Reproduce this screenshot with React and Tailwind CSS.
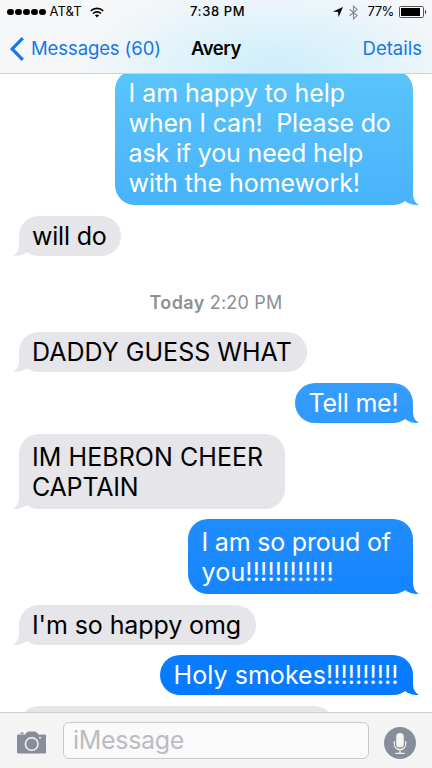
const messages = [
  {
    out: true,
    box: "w-[298px] h-[135px] pt-[8px] from-[#5ac4fb] to-[#49b3fb]",
    tail: "text-[#49b3fb]",
    lines: [
      ["I am happy to help", "tracking-[-0.05px]"],
      ["when I can!  Please do", "tracking-[-0.17px]"],
      ["ask if you need help", "tracking-[-0.15px]"],
      ["with the homework!", "tracking-[-0.06px]"],
    ],
  },
  { box: "w-[102px] h-[40px] pt-[5px]", lines: [["will do", "tracking-[-0.2px]"]] },
  { stamp: true },
  { box: "w-[288px] h-[40px] pt-[5px]", lines: [["DADDY GUESS WHAT", "tracking-[0.02px]"]] },
  {
    out: true,
    box: "w-[118px] h-[40px] pt-[5px] from-[#359dfd] to-[#3099fd]",
    tail: "text-[#3099fd]",
    lines: [["Tell me!", "tracking-[-0.2px]"]],
  },
  {
    box: "w-[266px] h-[75px] pt-[8px]",
    lines: [
      ["IM HEBRON CHEER", "tracking-[0.06px]"],
      ["CAPTAIN", "tracking-[-0.2px]"],
    ],
  },
  {
    out: true,
    box: "w-[225px] h-[75px] pt-[8px] from-[#208dfe] to-[#1684fe]",
    tail: "text-[#1684fe]",
    lines: [
      ["I am so proud of", "tracking-[-0.2px]"],
      ["you!!!!!!!!!!!!", "tracking-[0.18px]"],
    ],
  },
  { box: "w-[237px] h-[40px] pt-[5px]", lines: [["I'm so happy omg", "tracking-[-0.1px]"]] },
  {
    out: true,
    box: "w-[253px] h-[40px] pt-[5px] from-[#0a7dff] to-[#057aff]",
    tail: "text-[#057aff]",
    lines: [["Holy smokes!!!!!!!!!!", "tracking-[0.06px]"]],
  },
  { box: "w-[315px] h-[40px] pt-[5px]", lines: [] },
];

function Tail({ out, color }) {
  return (
    <svg
      viewBox="0 0 20 18"
      className={`absolute bottom-0 h-[18px] w-[20px] ${out ? "-right-[6px]" : "-left-[6px] -scale-x-100"} ${color}`}
    >
      <path d="M14 0V6C14 11.5 15.5 15.5 20 17.8C15.5 18.4 10 17.2 6 14L0 8V0Z" fill="currentColor" />
    </svg>
  );
}

function Bubble({ m }) {
  const look = m.out
    ? "self-end bg-linear-to-b text-white pl-[13.5px]"
    : "self-start bg-[#e5e5ea] text-black pl-[13px]";
  return (
    <div className={`relative shrink-0 rounded-[20px] ${look} ${m.box}`}>
      <Tail out={m.out} color={m.out ? m.tail : "text-[#e5e5ea]"} />
      {m.lines.map(([text, tracking]) => (
        <div key={text} className="relative h-[30px] text-[25px] leading-[30px] whitespace-pre">
          <span className={tracking}>{text}</span>
        </div>
      ))}
    </div>
  );
}

function StatusBar() {
  return (
    <div className="flex h-[24px] items-center pl-[7px] pr-[6px] text-[13px] text-black">
      <div className="flex w-[183px] items-center">
        <div className="flex gap-[1.5px]">
          {[0, 1, 2, 3, 4].map((i) => (
            <span key={i} className="size-[6.5px] rounded-full bg-black" />
          ))}
        </div>
        <span className="ml-[4px] tracking-[0.1px]">AT&amp;T</span>
        <svg viewBox="0 0 14 11" className="ml-[8px] h-[11px] w-[14px]" fill="none" stroke="#000" strokeWidth="1.7">
          <path d="M.7 4C4.2.6 9.8.6 13.3 4M3 6.5C5.2 4.4 8.8 4.4 11 6.5" />
          <path d="M7 10.5L4.9 8.3C6.1 7.2 7.9 7.2 9.1 8.3Z" fill="#000" stroke="none" />
        </svg>
      </div>
      <span className="font-medium tracking-[0.6px]">7:38 PM</span>
      <div className="ml-auto flex items-center">
        <svg viewBox="0 0 10 10" className="h-[10px] w-[10px]">
          <path d="M10 0L5.6 10L5 5L0 4.4Z" />
        </svg>
        <svg viewBox="0 0 10 16" className="ml-[6px] h-[15px] w-[9px]" fill="none" stroke="#8c8f94" strokeWidth="1.3">
          <path d="M.7 4.4L9 11.4L5 15V1L9 4.6L.7 11.6" />
        </svg>
        <span className="ml-[9px] tracking-[-0.4px]">77%</span>
        <div className="ml-[5px] h-[11.5px] w-[25px] rounded-[1.5px] border border-[#555] p-[0.5px]">
          <div className="h-full w-[19px] bg-black" />
        </div>
        <span className="ml-[0.5px] h-[4px] w-[1.5px] rounded-r bg-[#333]" />
      </div>
    </div>
  );
}

export default function App() {
  return (
    <div className="flex h-[768px] w-[432px] flex-col overflow-hidden bg-white font-['Inter','Liberation_Sans',sans-serif]">
      <header className="h-[74px] shrink-0 border-b border-[#c9d3d9] bg-[#f6f7f9] bg-[radial-gradient(ellipse_200px_90px_at_275px_70px,#cdeefc_0%,#dcf2fb_40%,#f6f7f900_100%)]">
        <StatusBar />
        <div className="flex h-[49px] items-center px-[10px] text-[18.5px] text-[#1577e6]">
          <div className="flex w-[181px] items-center">
            <svg viewBox="0 0 14 24" className="h-[24px] w-[14px]" fill="none" stroke="currentColor" strokeWidth="3.2">
              <path d="M12.8 1.2L2.2 12L12.8 22.8" />
            </svg>
            <span className="ml-[7px] tracking-[-0.1px] whitespace-nowrap">Messages (60)</span>
          </div>
          <span className="font-semibold tracking-[-0.45px] text-black">Avery</span>
          <span className="ml-auto tracking-[0px]">Details</span>
        </div>
      </header>

      <main className="min-h-0 flex-1 overflow-hidden">
        <div className="-mt-[4px] flex flex-col gap-[10.6px] pl-[19px] pr-[19px]">
          {messages.map((m, i) =>
            m.stamp ? (
              <div
                key={i}
                className="mt-[18px] mb-[1.7px] flex h-[36px] shrink-0 items-center justify-center gap-[5px] text-[18px] text-[#8e8e93]"
              >
                <span className="font-semibold tracking-[0.4px]">Today</span>
                <span className="tracking-[0.2px]">2:20 PM</span>
              </div>
            ) : (
              <Bubble key={i} m={m} />
            )
          )}
        </div>
      </main>

      <footer className="flex h-[56px] shrink-0 items-center border-t border-[#cfcfd1] bg-[#f4f4f5] pl-[17px] pr-[16px]">
        <svg viewBox="0 0 29 23" className="mt-[4px] h-[23px] w-[29px]">
          <path
            d="M1.5 3.6H8L10 1.2Q10.6.5 11.5.5H18Q18.9.5 19.5 1.2L21.5 3.6H27.5Q29 3.6 29 5V21Q29 22.5 27.5 22.5H1.5Q0 22.5 0 21V5Q0 3.6 1.5 3.6Z"
            fill="#868e99"
          />
          <path d="M3.5 2.2H6.5" stroke="#868e99" strokeWidth="1.4" />
          <circle cx="14.7" cy="13" r="6.3" fill="none" stroke="#f4f4f5" strokeWidth="1.5" />
          <circle cx="23" cy="6.7" r="1" fill="#f4f4f5" />
        </svg>
        <div className="ml-[17px] flex h-[37px] w-[306px] items-center rounded-[6px] border border-[#c8c8cd] bg-[#fafafa] pl-[9px] text-[25px] text-[#bcbcc1]">
          <span className="tracking-[-0.3px]">iMessage</span>
        </div>
        <svg viewBox="0 0 32 32" className="ml-auto mt-[4px] size-[32px]">
          <circle cx="16" cy="16" r="16" fill="#868e99" />
          <rect x="12.2" y="6" width="7.6" height="14.5" rx="3.8" fill="#f4f4f5" />
          <path d="M10.3 14V17A5.7 5.7 0 0 0 21.7 17V14M16 22.5V26M11.5 26.3H20.5" fill="none" stroke="#f4f4f5" strokeWidth="1.2" />
        </svg>
      </footer>
    </div>
  );
}
